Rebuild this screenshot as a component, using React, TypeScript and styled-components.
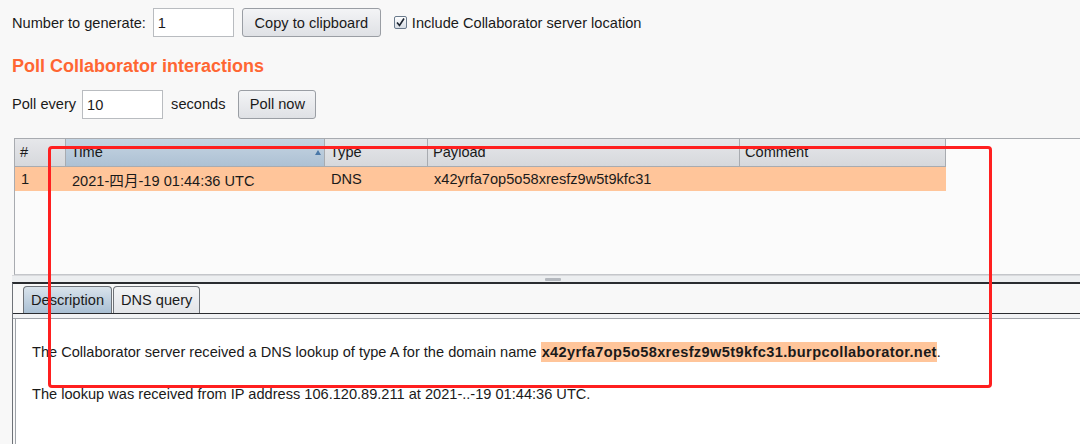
import React from "react";
import styled, { createGlobalStyle } from "styled-components";

const Global = createGlobalStyle`
  html, body { margin: 0; padding: 0; background: #f8f8f8; }
  body { font-family: "Liberation Sans", Arial, "Noto Sans CJK SC", sans-serif; font-size: 14.6px; color: #1a1a1a; }
  #root { width: 1080px; height: 444px; overflow: hidden; }
`;

const Page = styled.div`
  position: relative;
  width: 1080px;
  height: 444px;
  overflow: hidden;
  display: flex;
  flex-direction: column;
`;

const Row = styled.div<{ $h: number }>`
  display: flex;
  align-items: center;
  height: ${(p) => p.$h}px;
  padding-left: 12px;
  flex-shrink: 0;
`;

const Label = styled.span<{ $mr?: number }>`
  margin-right: ${(p) => p.$mr ?? 0}px;
  white-space: nowrap;
`;

const Field = styled.div<{ $w: number; $mr?: number }>`
  box-sizing: border-box;
  width: ${(p) => p.$w}px;
  height: 29px;
  background: #fff;
  border: 1px solid #b9bcc0;
  padding: 5px 4px;
  margin-right: ${(p) => p.$mr ?? 0}px;
  line-height: 18px;
`;

const Button = styled.div<{ $w: number; $mr?: number }>`
  box-sizing: border-box;
  width: ${(p) => p.$w}px;
  height: 29px;
  border: 1px solid #9a9ea4;
  border-radius: 3px;
  background: linear-gradient(#f3f4f6, #dfe1e5);
  display: flex;
  align-items: center;
  justify-content: center;
  margin-right: ${(p) => p.$mr ?? 0}px;
`;

const CheckBox = styled.div`
  width: 13px;
  height: 13px;
  box-sizing: border-box;
  border: 1px solid #6a7a8c;
  border-radius: 2px;
  background: linear-gradient(#ffffff, #d6dce4);
  margin-right: 5px;
  display: flex;
  align-items: center;
  justify-content: center;
`;

const Heading = styled.div`
  height: 42px;
  flex-shrink: 0;
  display: flex;
  align-items: center;
  padding-left: 12px;
  font-weight: bold;
  font-size: 18px;
  color: #ff6633;
`;

const Spacer = styled.div<{ $h: number }>`
  height: ${(p) => p.$h}px;
  flex-shrink: 0;
`;

const TablePanel = styled.div`
  margin-left: 14px;
  height: 135px;
  flex-shrink: 0;
  border-top: 1px solid #a8abb0;
  border-left: 1px solid #a8abb0;
  border-bottom: 1px solid #c4c6ca;
  background: #fbfbfb;
  display: flex;
  flex-direction: column;
`;

const HeaderRow = styled.div`
  display: flex;
  height: 27px;
  border-bottom: 1px solid #a8abb0;
  width: 931px;
`;

const HeadCell = styled.div<{ $w: number; $sorted?: boolean }>`
  position: relative;
  box-sizing: border-box;
  width: ${(p) => p.$w}px;
  padding: 5px 0 0 5px;
  line-height: 16px;
  background: ${(p) =>
    p.$sorted ? "linear-gradient(#c5d4e2, #adc1d4)" : "linear-gradient(#e6e7ea, #d6d8dc)"};
  border-right: 1px solid #a8abb0;
`;

const SortArrow = styled.span`
  position: absolute;
  right: 3px;
  top: 11px;
  width: 0;
  height: 0;
  border-left: 3px solid transparent;
  border-right: 3px solid transparent;
  border-bottom: 5px solid #4a78a8;
`;

const DataRow = styled.div`
  display: flex;
  height: 24px;
  width: 931px;
  background: #ffc59a;
  align-items: center;
`;

const DataCell = styled.div<{ $w: number }>`
  box-sizing: border-box;
  width: ${(p) => p.$w}px;
  padding-left: 6px;
  white-space: nowrap;
`;

const Splitter = styled.div`
  height: 6px;
  flex-shrink: 0;
  margin-left: 12px;
  border-top: 1px solid #d8d9dc;
  background: #eceef0;
  display: flex;
  justify-content: center;
  align-items: center;
  padding-left: 14px;
`;

const Grip = styled.div`
  width: 16px;
  height: 3px;
  background: #b4b8be;
  border-radius: 1px;
`;

const TabArea = styled.div`
  flex: 1;
  margin-left: 12px;
  border-top: 2px solid #2a2c30;
  border-left: 1px solid #6e7278;
  display: flex;
  flex-direction: column;
  background: #f8f8f8;
`;

const TabStrip = styled.div`
  display: flex;
  align-items: flex-end;
  height: 29px;
  flex-shrink: 0;
  padding-left: 10px;
  border-bottom: 1px solid #2a2c30;
`;

const Tab = styled.div<{ $active?: boolean }>`
  box-sizing: border-box;
  height: 27px;
  padding: 0 7px;
  display: flex;
  align-items: center;
  border: 1px solid #6e7278;
  border-bottom: none;
  border-radius: 4px 4px 0 0;
  margin-right: 1px;
  background: ${(p) =>
    p.$active ? "linear-gradient(#d9e3ec, #a9bfd3)" : "linear-gradient(#f3f4f6, #e2e4e8)"};
`;

const TabGap = styled.div`
  height: 4px;
  flex-shrink: 0;
  background: #f2f3f5;
  border-bottom: 1px solid #9ea2a8;
`;

const Content = styled.div`
  flex: 1;
  margin-left: 2px;
  border-left: 1px solid #9ea2a8;
  background: #ffffff;
  padding: 22px 0 0 16px;
`;

const Para = styled.p`
  margin: 0 0 20px 0;
  line-height: 22px;
  white-space: nowrap;
`;

const Highlight = styled.span`
  background: #ffc59a;
  font-weight: bold;
  letter-spacing: 0.37px;
  padding: 2px 0 2px 1px;
`;

const Annotation = styled.div`
  position: absolute;
  left: 48px;
  top: 146px;
  width: 944px;
  height: 242px;
  box-sizing: border-box;
  border: 3px solid #ff1f1f;
  border-radius: 4px;
  pointer-events: none;
`;

const cols = [51, 259, 103, 312, 206];

export default function App() {
  return (
    <Page>
      <Global />
      <Row $h={45}>
        <Label $mr={7}>Number to generate:</Label>
        <Field $w={81} $mr={8}>1</Field>
        <Button $w={139} $mr={13}>Copy to clipboard</Button>
        <CheckBox>
          <svg width="11" height="11" viewBox="0 0 11 11">
            <path d="M2 5.5 L4.5 8.5 L9 1.5" fill="none" stroke="#1c2430" strokeWidth="1.6" />
          </svg>
        </CheckBox>
        <Label>Include Collaborator server location</Label>
      </Row>
      <Heading>Poll Collaborator interactions</Heading>
      <Row $h={34}>
        <Label $mr={6}>Poll every</Label>
        <Field $w={81} $mr={8}>10</Field>
        <Label $mr={13}>seconds</Label>
        <Button $w={78}>Poll now</Button>
      </Row>
      <Spacer $h={17} />
      <TablePanel>
        <HeaderRow>
          <HeadCell $w={cols[0]}>#</HeadCell>
          <HeadCell $w={cols[1]} $sorted>
            Time
            <SortArrow />
          </HeadCell>
          <HeadCell $w={cols[2]}>Type</HeadCell>
          <HeadCell $w={cols[3]}>Payload</HeadCell>
          <HeadCell $w={cols[4]}>Comment</HeadCell>
        </HeaderRow>
        <DataRow>
          <DataCell $w={cols[0]}>1</DataCell>
          <DataCell $w={cols[1]}>2021-四月-19 01:44:36 UTC</DataCell>
          <DataCell $w={cols[2]}>DNS</DataCell>
          <DataCell $w={cols[3]}>x42yrfa7op5o58xresfz9w5t9kfc31</DataCell>
          <DataCell $w={cols[4]}></DataCell>
        </DataRow>
      </TablePanel>
      <Splitter>
        <Grip />
      </Splitter>
      <TabArea>
        <TabStrip>
          <Tab $active>Description</Tab>
          <Tab>DNS query</Tab>
        </TabStrip>
        <TabGap />
        <Content>
          <Para>
            The Collaborator server received a DNS lookup of type A for the domain name{" "}
            <Highlight>x42yrfa7op5o58xresfz9w5t9kfc31.burpcollaborator.net</Highlight>.
          </Para>
          <Para>The lookup was received from IP address 106.120.89.211 at 2021-..-19 01:44:36 UTC.</Para>
        </Content>
      </TabArea>
      <Annotation />
    </Page>
  );
}
